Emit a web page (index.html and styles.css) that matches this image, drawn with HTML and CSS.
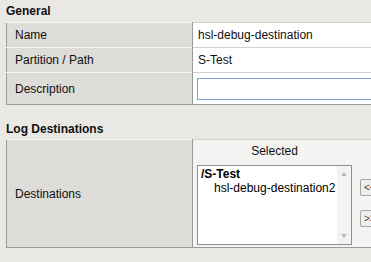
FILE: index.html
```html
<!DOCTYPE html>
<html lang="en">

<head>
    <meta charset="UTF-8">
    <title>Log Publisher</title>
    <link rel="stylesheet" href="styles.css">
</head>

<body>
    <div class="page">
        <div class="section-title">General</div>
        <table class="props">
            <colgroup>
                <col class="col-label">
                <col>
            </colgroup>
            <tr class="row">
                <td class="label">Name</td>
                <td class="value">hsl-debug-destination</td>
            </tr>
            <tr class="row">
                <td class="label">Partition / Path</td>
                <td class="value">S-Test</td>
            </tr>
            <tr class="row row-input">
                <td class="label">Description</td>
                <td class="value"><input type="text" class="text-input"></td>
            </tr>
        </table>

        <div class="section-title second">Log Destinations</div>
        <table class="props">
            <colgroup>
                <col class="col-label">
                <col>
            </colgroup>
            <tr class="row row-dest">
                <td class="label">Destinations</td>
                <td class="value value-dest">
                    <div class="chooser">
                        <div class="selected-col">
                            <div class="col-head">Selected</div>
                            <div class="listbox">
                                <div class="list-items">
                                    <div class="folder">/S-Test</div>
                                    <div class="item">hsl-debug-destination2</div>
                                </div>
                                <div class="scroll">
                                    <span class="arrow up"></span>
                                    <span class="arrow down"></span>
                                </div>
                            </div>
                        </div>
                        <div class="move-btns">
                            <button class="btn">&lt;&lt;</button>
                            <button class="btn">&gt;&gt;</button>
                        </div>
                    </div>
                </td>
            </tr>
        </table>
    </div>
</body>

</html>
```

FILE: styles.css
```css
html, body {
    margin: 0;
    padding: 0;
}

body {
    background: #e9e8e4;
    font-family: "Liberation Sans", Arial, sans-serif;
    font-size: 12px;
    color: #111;
}

.page {
    width: 371px;
    height: 262px;
    overflow: hidden;
}

.section-title {
    font-weight: bold;
    line-height: 14px;
    padding: 4px 6px 4px 6px;
}

.section-title.second {
    padding-top: 17px;
    padding-bottom: 3px;
}

.props {
    margin-left: 6px;
    width: 420px;
    table-layout: fixed;
    border-collapse: collapse;
    border: 1px solid #9a9a98;
}

.col-label {
    width: 186px;
}

.label {
    background: #dddcd8;
    padding: 0 0 0 8px;
    border-right: 1px solid #9a9a98;
    border-top: 1px solid #f6f6f4;
    vertical-align: middle;
    white-space: nowrap;
}

.value {
    background: #fff;
    padding: 0 0 0 5px;
    border-top: 1px solid #d0d0ce;
    vertical-align: middle;
    white-space: nowrap;
}

.row {
    height: 25px;
}

.row-input {
    height: 32px;
}

.text-input {
    display: block;
    width: 200px;
    height: 22px;
    box-sizing: border-box;
    border: 1px solid #7f9fd6;
    margin: 0 0 0 -1px;
    padding: 0;
    background: #fff;
}

.row-dest {
    height: 108px;
}

.value-dest {
    background: #f4f4f2;
    padding: 0 0 0 4px;
}

.chooser {
    display: flex;
    align-items: flex-start;
    gap: 8px;
}

.selected-col {
    width: 155px;
}

.col-head {
    text-align: center;
    line-height: 14px;
    padding: 1px 0 7px;
}

.listbox {
    display: flex;
    height: 78px;
    border: 1px solid #8f8f8d;
    background: #fff;
}

.list-items {
    flex: 1;
    padding: 1px 0 0 3px;
    line-height: 14px;
    color: #000;
}

.folder {
    font-weight: bold;
}

.item {
    padding-left: 13px;
}

.scroll {
    width: 14px;
    background: #f3f3f3;
    display: flex;
    flex-direction: column;
    justify-content: space-between;
    align-items: center;
    padding: 6px 0;
}

.arrow {
    width: 0;
    height: 0;
    border-left: 3px solid transparent;
    border-right: 3px solid transparent;
}

.arrow.up {
    border-bottom: 4px solid #b8b8b8;
}

.arrow.down {
    border-top: 4px solid #b8b8b8;
}

.move-btns {
    display: flex;
    flex-direction: column;
    gap: 14px;
    padding-top: 36px;
}

.btn {
    width: 22px;
    height: 17px;
    padding: 0 0 0 3px;
    text-align: left;
    font: 10px "Liberation Sans", Arial, sans-serif;
    color: #444;
    border: 1px solid #a5a5a3;
    border-radius: 2px;
    background: #eeeeec;
}
```
